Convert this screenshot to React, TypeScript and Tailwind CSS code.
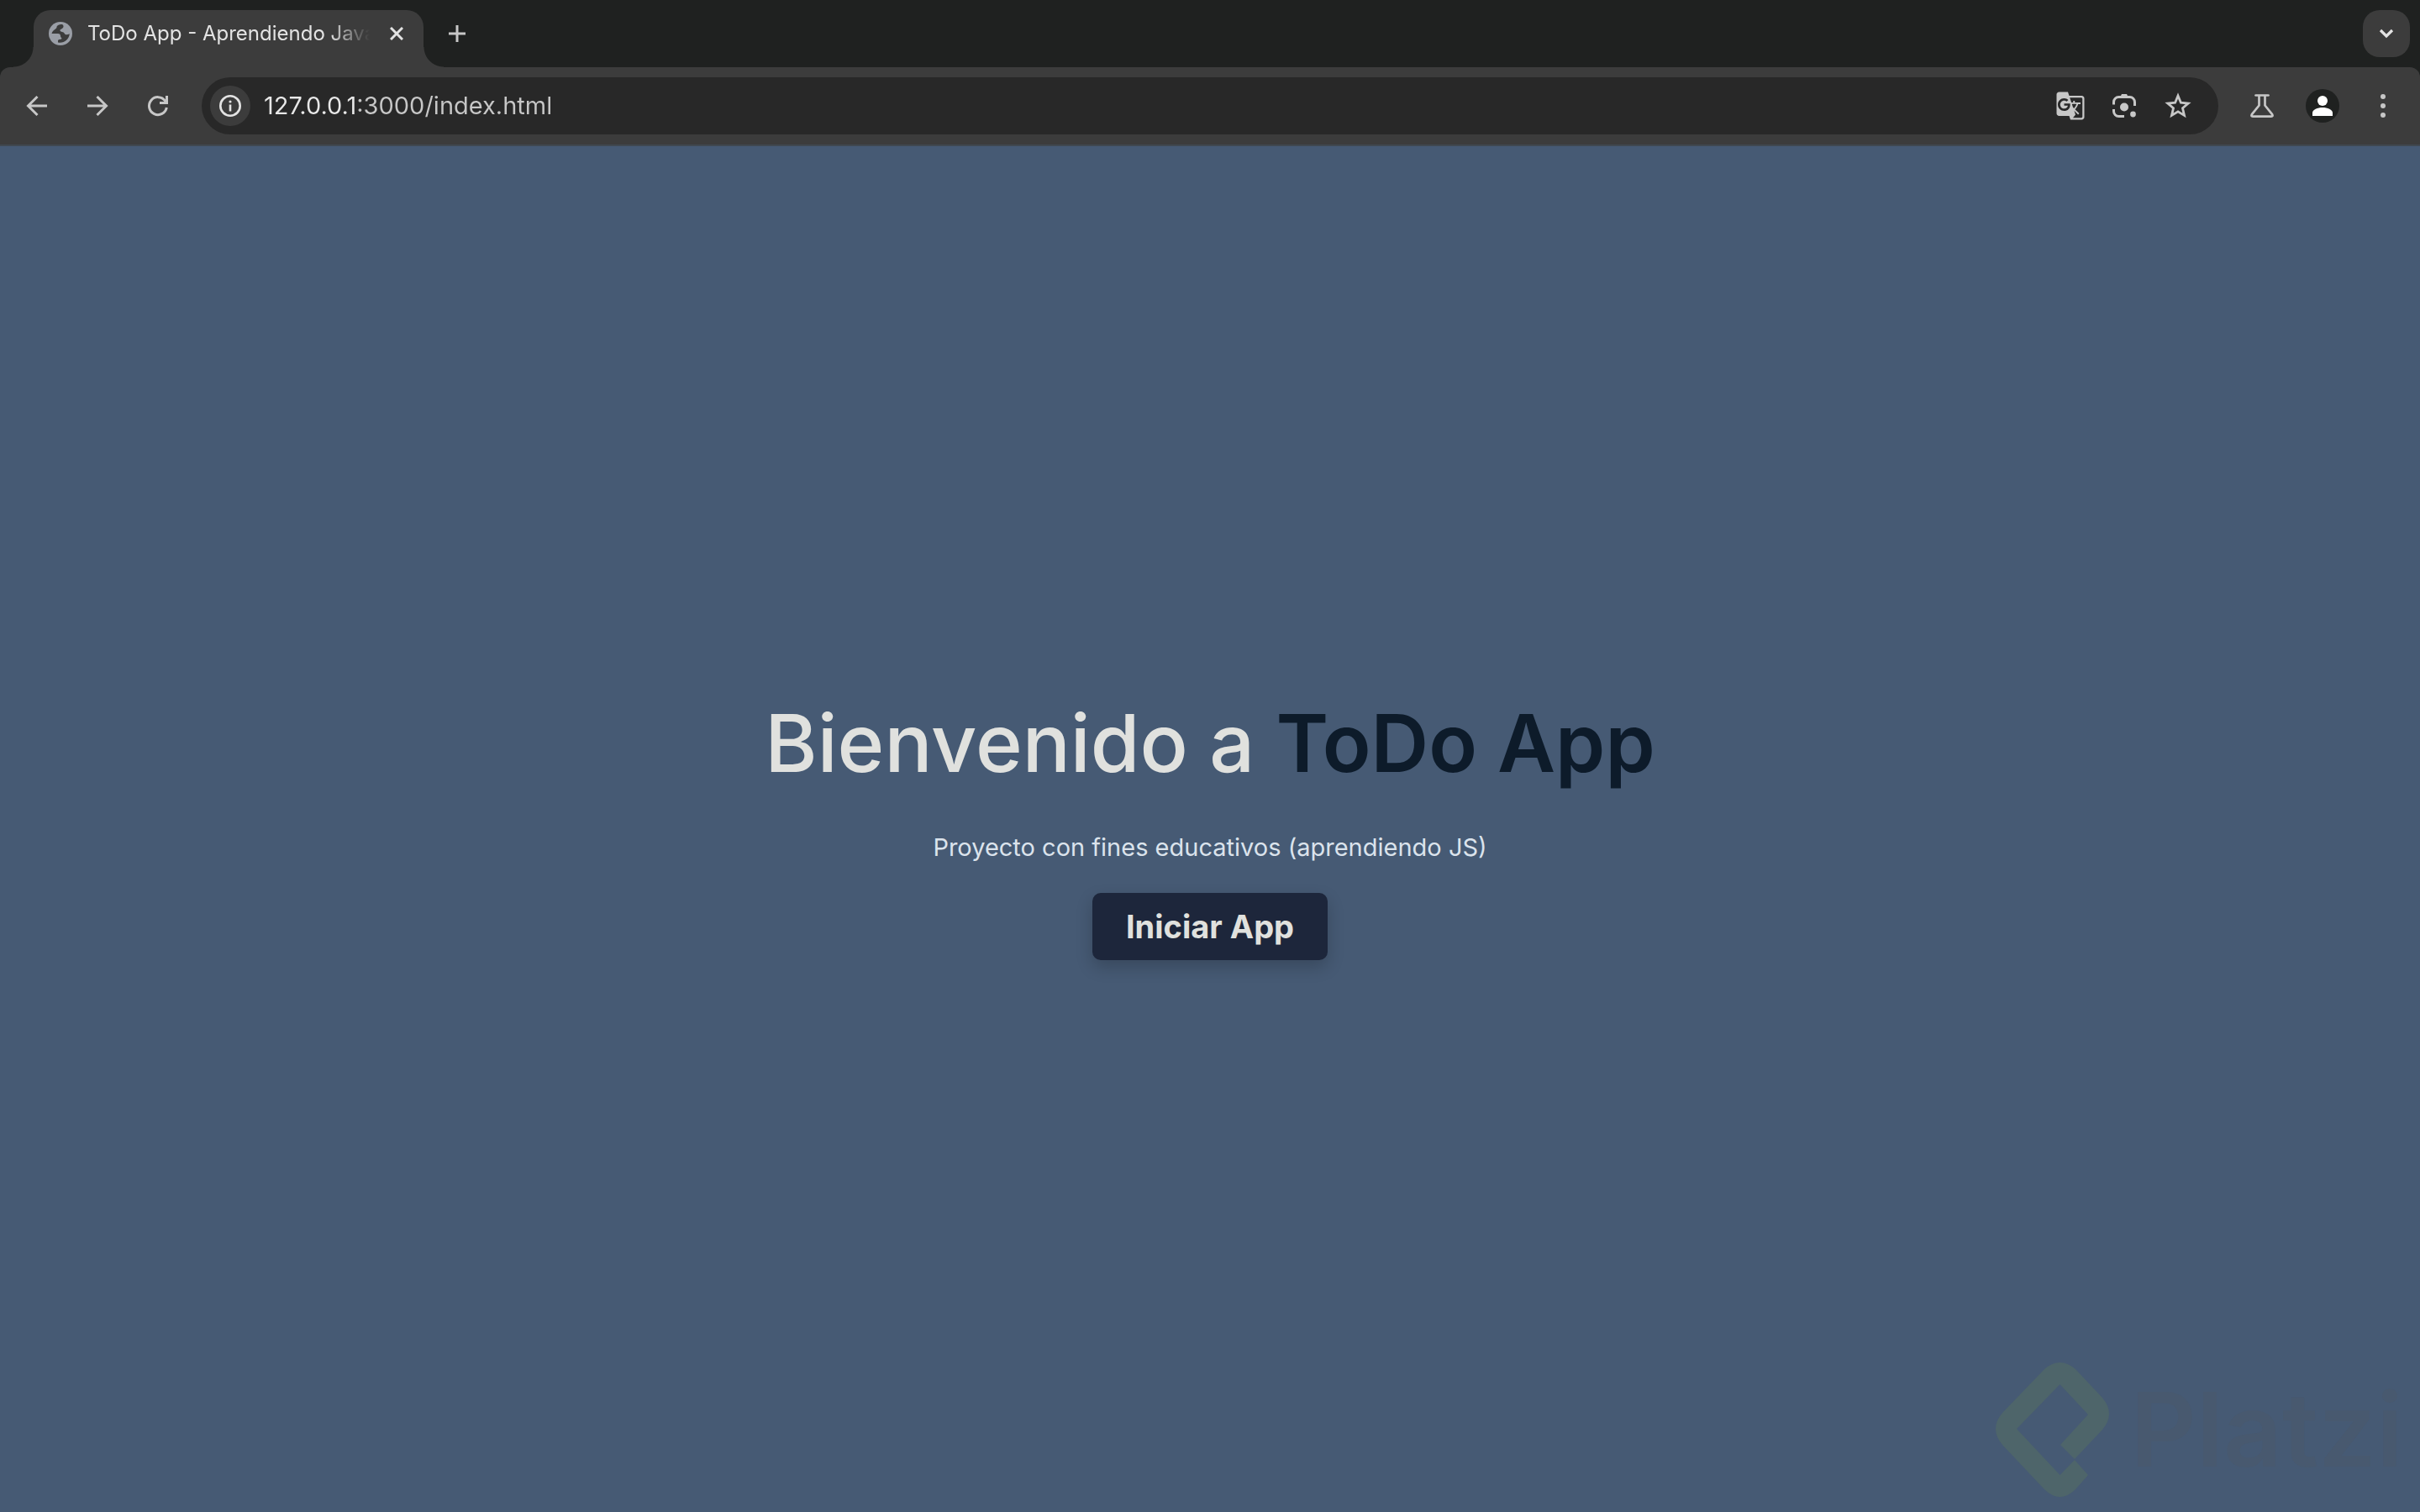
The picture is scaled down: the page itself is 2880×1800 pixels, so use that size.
import { useState } from "react";
import { MdGTranslate } from "react-icons/md";

function GlobeIcon() {
  return (
    <svg className="size-7 shrink-0" viewBox="0 0 28 28" aria-hidden="true">
      <circle cx="14" cy="14" r="14" fill="#9a9ea6" />
      <path
        d="M16 3C12 3 9.500 4.500 9.500 6.500C9.500 8.500 5 9 3.500 14H11C13 14 14 15 14 17C14 18.500 15.500 19 15.500 20C15.500 21 11 20.500 11 22.500V24.500C18 26 24 21 24.800 14.200C22 16 19 15.500 18.500 13.500C18 11.500 14 12.500 13.500 10.500C13 8.500 17.500 8.500 17.500 5.500C17.500 4.500 17 3.500 16 3Z"
        fill="#3c3c3c"
      />
    </svg>
  );
}

function BackIcon() {
  return (
    <svg className="size-7" viewBox="0 0 28 28" fill="none" stroke="currentColor" strokeWidth="3">
      <path d="M26 14H4.500M14.500 3L3.500 14L14.500 25" />
    </svg>
  );
}

function ForwardIcon() {
  return (
    <svg className="size-7" viewBox="0 0 28 28" fill="none" stroke="currentColor" strokeWidth="3">
      <path d="M2 14H23.500M13.500 3L24.500 14L13.500 25" />
    </svg>
  );
}

function ReloadIcon() {
  return (
    <svg className="size-7" viewBox="0 0 28 28" fill="none" stroke="currentColor" strokeWidth="3">
      <path d="M24.300 16A10.500 10.500 0 1 1 22.500 8L23.500 10" />
      <path d="M24.500 2V10.500H16" />
    </svg>
  );
}

function InfoIcon() {
  return (
    <svg className="size-7" viewBox="0 0 28 28" fill="none" stroke="currentColor">
      <circle cx="14" cy="14" r="11.700" strokeWidth="2.600" />
      <path d="M14 12.500V20.500" strokeWidth="2.600" />
      <circle cx="14" cy="9" r="1.600" fill="currentColor" stroke="none" />
    </svg>
  );
}

function LensIcon() {
  return (
    <svg className="size-8" viewBox="0 0 32 32" fill="none" stroke="currentColor" strokeWidth="3">
      <path d="M3.500 14.500V11.500A6 6 0 0 1 9.500 5.500H22.500A6 6 0 0 1 28.500 11.500V16" />
      <path d="M3.500 20V22.500A6 6 0 0 0 9.500 28.500H16" />
      <path d="M11 6L13 2H19L21 6Z" fill="currentColor" stroke="none" />
      <circle cx="16" cy="17.500" r="5" fill="currentColor" stroke="none" />
      <circle cx="26.500" cy="26" r="3.400" fill="currentColor" stroke="none" />
    </svg>
  );
}

function StarIcon() {
  return (
    <svg className="size-9" viewBox="0 0 36 36" fill="none" stroke="currentColor" strokeWidth="2.800">
      <path d="M18 6L21.400 14.200L30.200 15L23.500 20.800L25.500 29.400L18 24.900L10.500 29.400L12.500 20.800L5.800 15L14.600 14.200Z" />
    </svg>
  );
}

function FlaskIcon() {
  return (
    <svg className="size-8" viewBox="0 0 32 32" fill="none" stroke="currentColor" strokeWidth="2.700">
      <path d="M8.500 3.500H23.500" strokeLinecap="round" />
      <path
        d="M12.500 3.500V15.500L3.900 26.200Q2.500 28.600 5 28.600H27Q29.500 28.600 28.100 26.200L19.500 15.500V3.500"
        strokeLinejoin="round"
      />
    </svg>
  );
}

function AvatarIcon() {
  return (
    <svg className="size-10" viewBox="0 0 40 40" aria-hidden="true">
      <circle cx="20" cy="20" r="20" fill="#1f2120" />
      <circle cx="20" cy="14" r="6" fill="#fff" />
      <path d="M8 32V28.500C8 24.500 14 22 20 22C26 22 32 24.500 32 28.500V32Z" fill="#fff" />
    </svg>
  );
}

function DotsIcon() {
  return (
    <svg className="size-7" viewBox="0 0 28 28" fill="currentColor">
      <circle cx="14" cy="3" r="3" />
      <circle cx="14" cy="14" r="3" />
      <circle cx="14" cy="25" r="3" />
    </svg>
  );
}

function TabStrip() {
  return (
    <div className="flex h-20 items-start bg-[#1f2120] pt-3 pr-3 pl-10">
      <div className="relative flex h-17 w-116 items-start rounded-t-[20px] bg-[#3c3c3c]">
        {/* curved feet of the active tab */}
        <span className="absolute bottom-0 -left-6 size-6 bg-[radial-gradient(circle_at_0_0,transparent_23px,#3c3c3c_24px)]" />
        <span className="absolute -right-6 bottom-0 size-6 bg-[radial-gradient(circle_at_100%_0,transparent_23px,#3c3c3c_24px)]" />
        <div className="flex h-14 w-full items-center pr-4 pl-[18px]">
          <GlobeIcon />
          <span className="ml-[18px] min-w-0 flex-1 text-2xl whitespace-nowrap text-[#e3e3e3] [mask-image:linear-gradient(to_right,#000_calc(100%-48px),transparent)]">
            ToDo App - Aprendiendo Java
          </span>
          <button
            type="button"
            aria-label="Cerrar pestaña"
            className="ml-4 flex size-8 items-center justify-center text-[#e3e3e3]"
          >
            <svg className="size-4" viewBox="0 0 16 16" stroke="currentColor" strokeWidth="3">
              <path d="M1 1L15 15M15 1L1 15" />
            </svg>
          </button>
        </div>
      </div>
      <button
        type="button"
        aria-label="Nueva pestaña"
        className="ml-3 flex size-14 items-center justify-center text-[#c7c7c7]"
      >
        <svg className="size-5" viewBox="0 0 20 20" stroke="currentColor" strokeWidth="3">
          <path d="M10 0V20M0 10H20" />
        </svg>
      </button>
      <button
        type="button"
        aria-label="Buscar pestañas"
        className="ml-auto flex size-14 items-center justify-center rounded-[20px] bg-[#3c3c3c] text-[#e3e3e3]"
      >
        <svg className="size-5" viewBox="0 0 20 20" fill="none" stroke="currentColor" strokeWidth="3.200">
          <path d="M3 6L10 13L17 6" />
        </svg>
      </button>
    </div>
  );
}

function Toolbar() {
  const [url, setUrl] = useState("127.0.0.1:3000/index.html");
  const navButton = "flex h-17 w-18 shrink-0 items-center justify-center";

  return (
    <div className="bg-[#1f2120]">
      <div className="flex items-center rounded-t-xl border-b-2 border-[#404850] bg-[#3c3c3c] px-2 py-3 text-[#c7c7c7]">
        <button type="button" aria-label="Atrás" className={navButton}>
          <BackIcon />
        </button>
        <button type="button" aria-label="Adelante" className={navButton}>
          <ForwardIcon />
        </button>
        <button type="button" aria-label="Recargar" className={navButton}>
          <ReloadIcon />
        </button>
        <div className="mx-4 flex h-17 flex-1 items-center rounded-full bg-[#282828] pr-4 pl-[10px]">
          <button
            type="button"
            aria-label="Información del sitio"
            className="flex size-12 items-center justify-center rounded-full bg-[#3c3c3c] text-[#e3e3e3]"
          >
            <InfoIcon />
          </button>
          {/* host part is brighter than port and path */}
          <input
            type="text"
            aria-label="Dirección"
            value={url}
            onChange={(e) => setUrl(e.target.value)}
            className="ml-4 min-w-0 flex-1 bg-[linear-gradient(to_right,#e8e8e8_112px,#c7c7c7_112px)] bg-clip-text text-[29px] leading-10 text-transparent caret-white outline-none"
          />
          <button type="button" aria-label="Traducir" className="flex w-16 justify-center">
            <MdGTranslate className="size-9" />
          </button>
          <button type="button" aria-label="Buscar con Lens" className="flex w-16 justify-center">
            <LensIcon />
          </button>
          <button type="button" aria-label="Guardar en favoritos" className="flex w-16 justify-center">
            <StarIcon />
          </button>
        </div>
        <button type="button" aria-label="Experimentos" className={navButton}>
          <FlaskIcon />
        </button>
        <button type="button" aria-label="Perfil" className={navButton}>
          <AvatarIcon />
        </button>
        <button type="button" aria-label="Menú" className={navButton}>
          <DotsIcon />
        </button>
      </div>
    </div>
  );
}

function Watermark() {
  return (
    <div className="pointer-events-none absolute right-5 bottom-4 flex items-center gap-6">
      <svg className="h-[164px] w-[136px]" viewBox="0 -2 136 164" fill="#4e656a" aria-hidden="true">
        <path d="M58 8Q76.500 -8 95 8L127 42Q143 61 127 80L94 115L77 98L110 62L76.500 26L25 79L76.500 134L94 116L110 134L95 151Q76.500 169 58 151L8 98Q-8 79 8 60Z" />
      </svg>
      <span className="text-[122px] leading-none font-semibold text-[#48596f]">Platzi</span>
    </div>
  );
}

export default function App() {
  return (
    <div className="flex min-h-screen flex-col bg-[#465a74] font-['Inter','Liberation_Sans',sans-serif]">
      <header>
        <TabStrip />
        <Toolbar />
      </header>

      <main className="relative flex flex-1 flex-col items-center justify-center">
        <h1 className="text-[95px] leading-[108px] font-medium text-[#e0e1de]">
          Bienvenido a <span className="font-semibold text-[#0d1b2a]">ToDo App</span>
        </h1>
        <p className="mt-11 text-[29px] leading-[52px] text-[#dbe3ec]">
          Proyecto con fines educativos (aprendiendo JS)
        </p>
        <button
          type="button"
          className="mt-7 h-20 rounded-[10px] bg-[#1d263b] px-10 text-[38px] font-bold text-[#e0e1de] shadow-[0_8px_20px_rgba(0,0,0,0.2)]"
        >
          Iniciar App
        </button>
        <Watermark />
      </main>
    </div>
  );
}
